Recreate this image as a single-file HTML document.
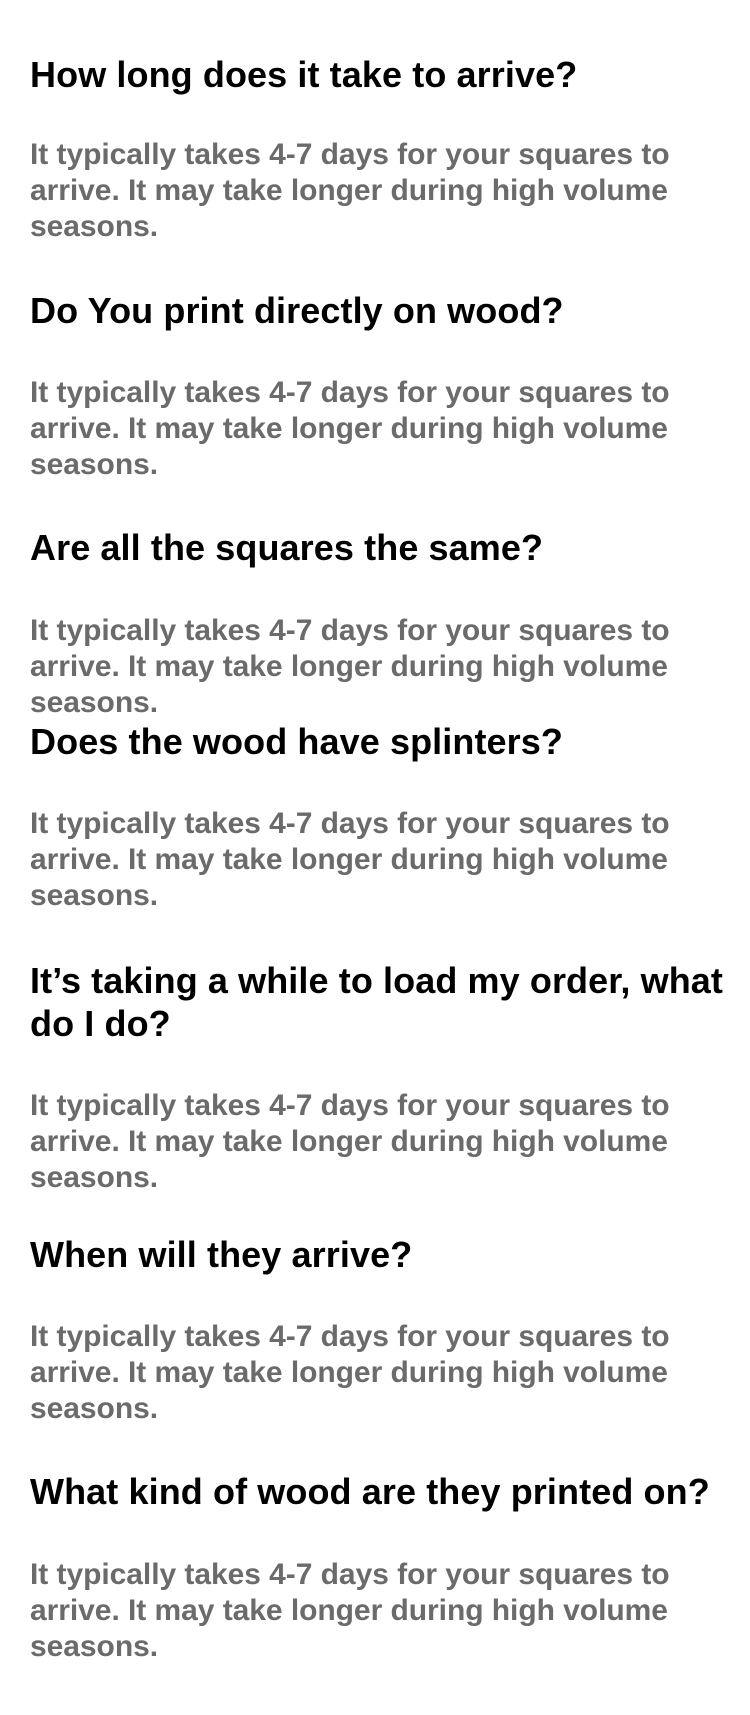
<!DOCTYPE html>
<html><head><meta charset="utf-8"><style>
html,body{margin:0;padding:0;background:#fff;width:750px;height:1715px;overflow:hidden}
body{position:relative;font-family:"Liberation Sans",Helvetica,Arial,sans-serif}
.h{position:absolute;left:30px;font-size:36px;line-height:43px;font-weight:bold;color:#000;white-space:nowrap;letter-spacing:0.1px}
.b{position:absolute;left:30px;font-size:30px;line-height:36px;font-weight:bold;color:#6b6b6b;white-space:nowrap;letter-spacing:-0.05px}
</style></head><body>
<div class="h" style="top:53px">How long does it take to arrive?</div>
<div class="b" style="top:137px">It typically takes 4-7 days for your squares to<br>arrive. It may take longer during high volume<br>seasons.</div>
<div class="h" style="top:289px">Do You print directly on wood?</div>
<div class="b" style="top:375px">It typically takes 4-7 days for your squares to<br>arrive. It may take longer during high volume<br>seasons.</div>
<div class="h" style="top:526px">Are all the squares the same?</div>
<div class="b" style="top:613px">It typically takes 4-7 days for your squares to<br>arrive. It may take longer during high volume<br>seasons.</div>
<div class="h" style="top:720px">Does the wood have splinters?</div>
<div class="b" style="top:806px">It typically takes 4-7 days for your squares to<br>arrive. It may take longer during high volume<br>seasons.</div>
<div class="h" style="top:959px">It’s taking a while to load my order, what<br>do I do?</div>
<div class="b" style="top:1088px">It typically takes 4-7 days for your squares to<br>arrive. It may take longer during high volume<br>seasons.</div>
<div class="h" style="top:1233px">When will they arrive?</div>
<div class="b" style="top:1319px">It typically takes 4-7 days for your squares to<br>arrive. It may take longer during high volume<br>seasons.</div>
<div class="h" style="top:1470px">What kind of wood are they printed on?</div>
<div class="b" style="top:1557px">It typically takes 4-7 days for your squares to<br>arrive. It may take longer during high volume<br>seasons.</div>
</body></html>
